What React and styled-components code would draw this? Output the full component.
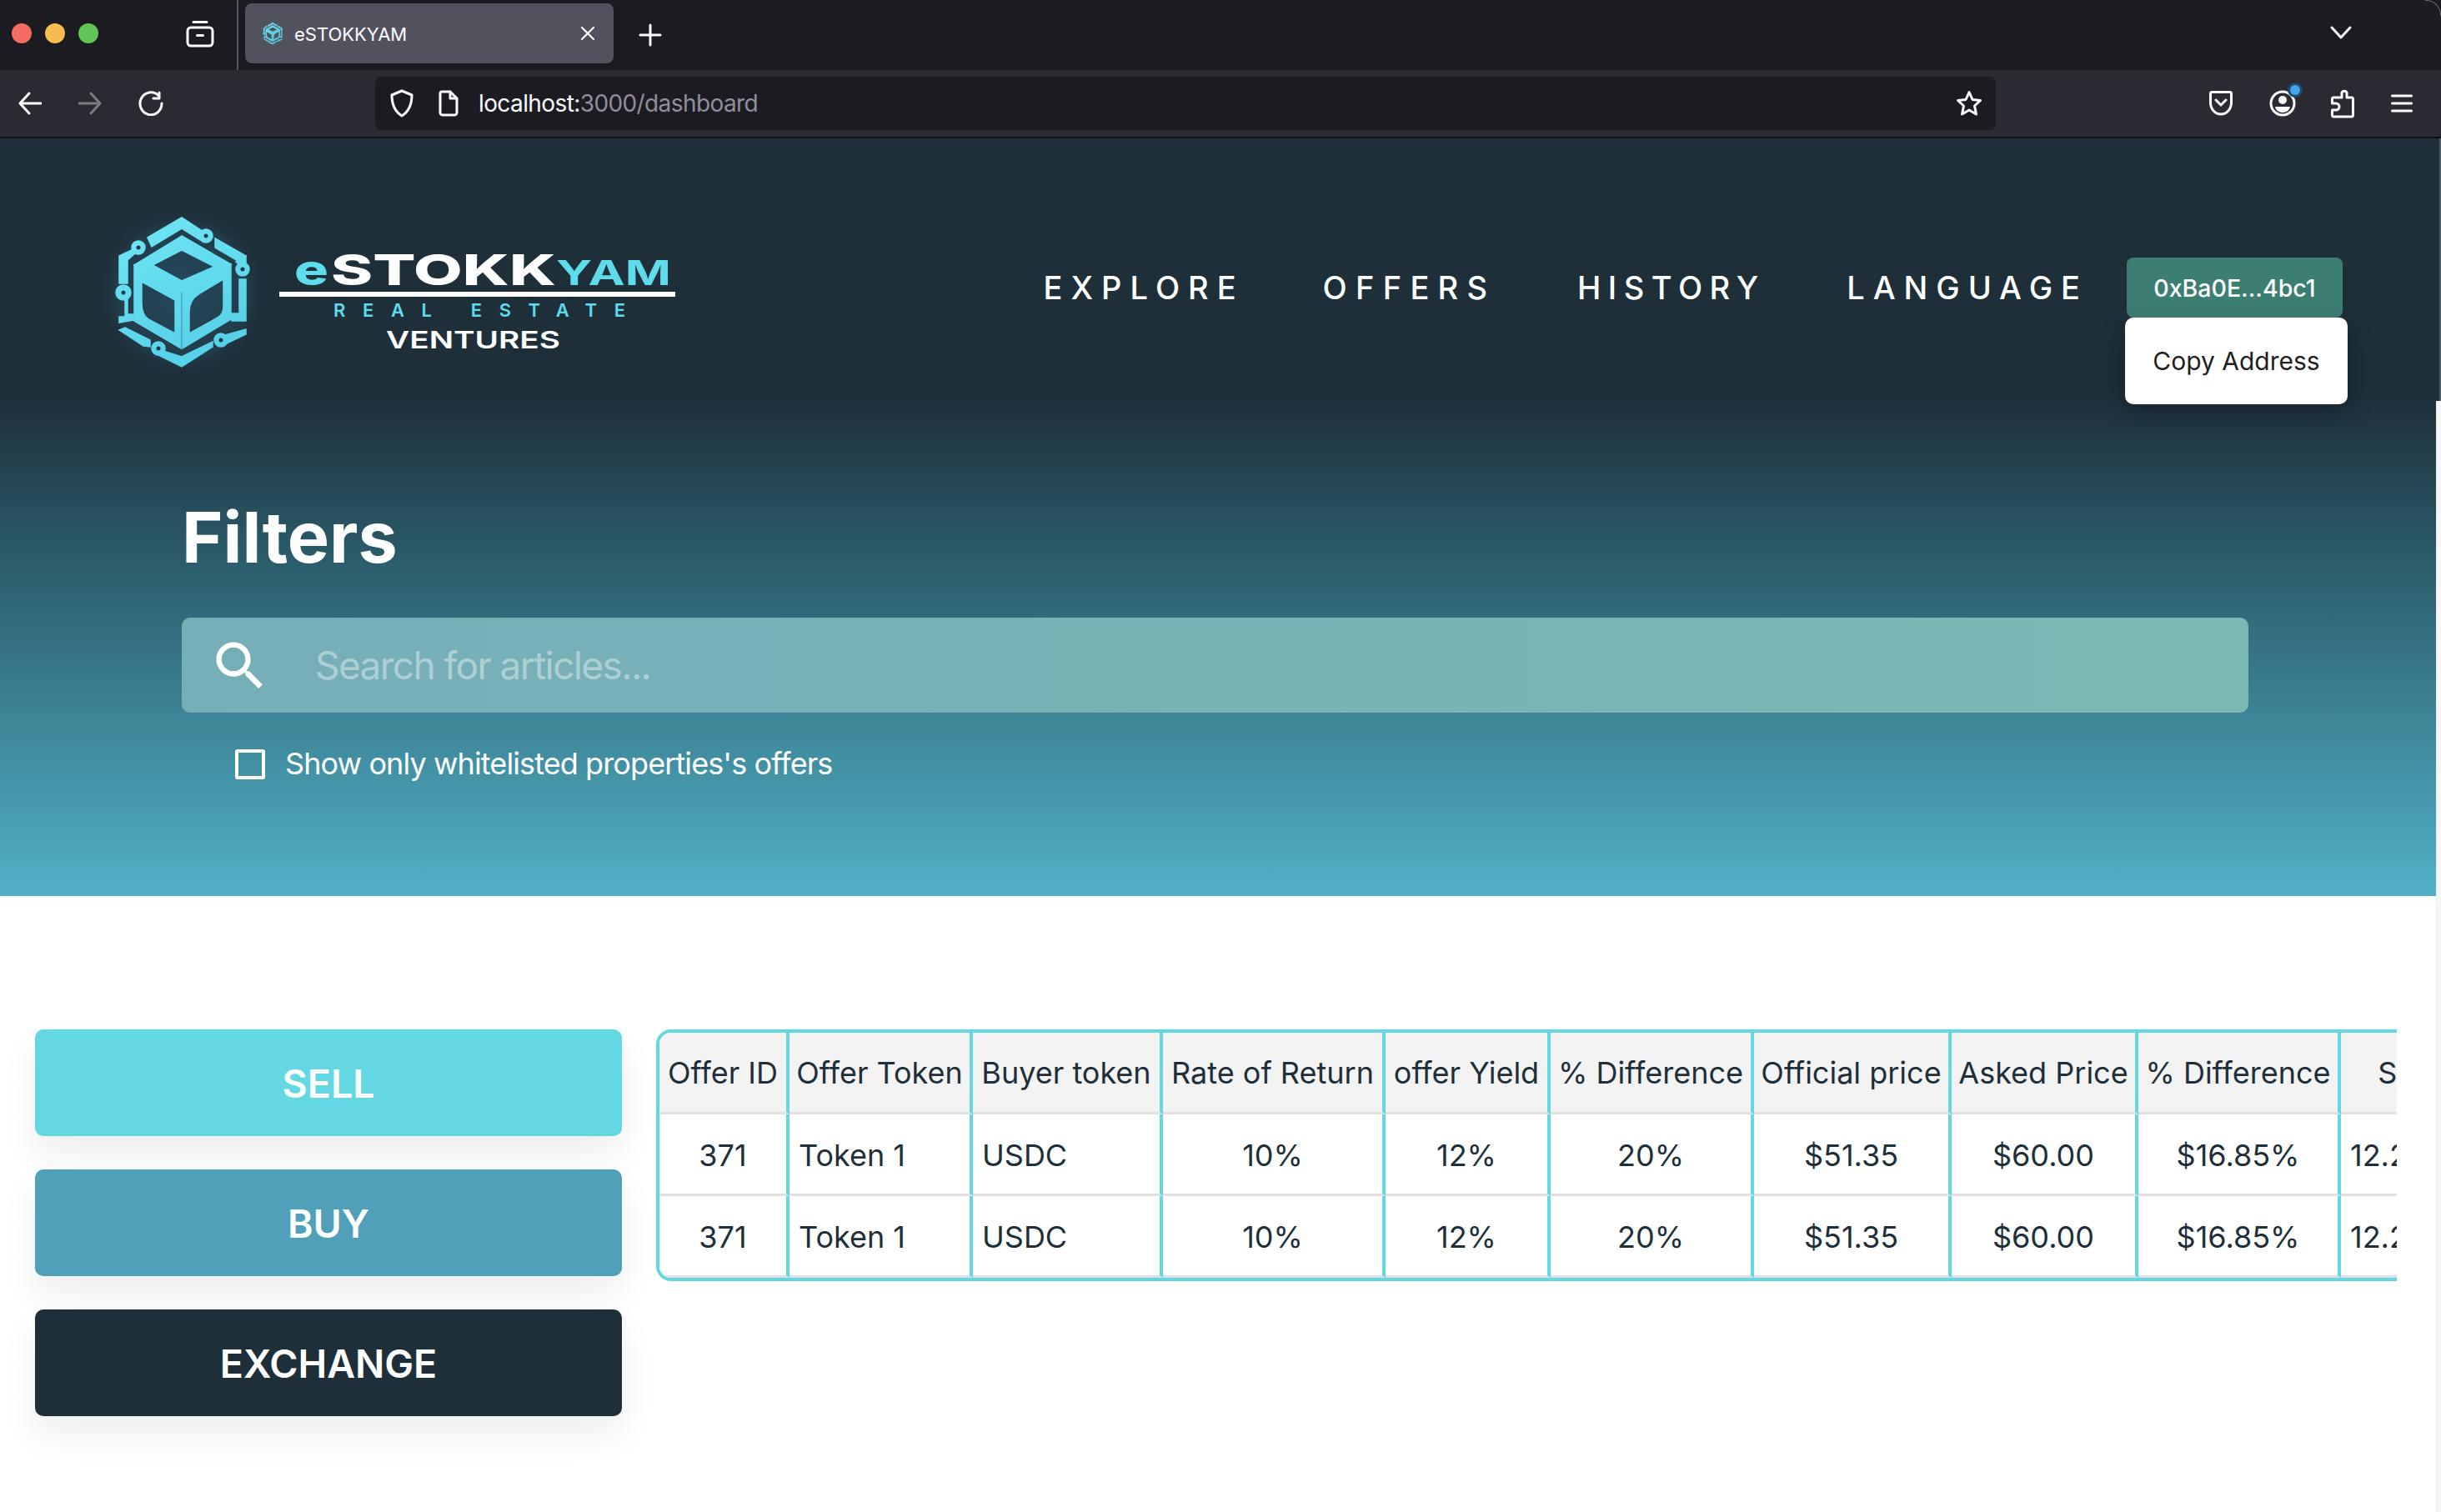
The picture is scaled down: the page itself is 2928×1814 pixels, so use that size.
import React from "react";
import styled, { createGlobalStyle } from "styled-components";

const Global = createGlobalStyle`
  html, body { margin: 0; padding: 0; background: #fff; }
  * { box-sizing: border-box; }
  #root { font-family: Inter, "Liberation Sans", sans-serif; }
`;

const Page = styled.div`
  position: relative;
  width: 2928px;
  height: 1814px;
  overflow: hidden;
  background: #fff;
`;

const TabBar = styled.div`
  position: relative;
  display: flex;
  align-items: flex-start;
  height: 84px;
  padding-left: 14px;
  background: #1c1b22;
  &::after {
    content: "";
    position: absolute;
    top: 0;
    right: 0;
    width: 18px;
    height: 18px;
    border-top: 1.5px solid #6d6d75;
    border-right: 1.5px solid #6d6d75;
    border-top-right-radius: 18px;
  }
`;
const Lights = styled.div`
  display: flex;
  gap: 16px;
  margin-top: 28px;
`;
const Light = styled.span`
  width: 24px;
  height: 24px;
  border-radius: 50%;
  background: ${(p) => p.$c};
`;
const ViewIcon = styled.svg`
  width: 34px;
  height: 34px;
  margin: 23px 0 0 105px;
`;
const Divider = styled.div`
  width: 2px;
  height: 84px;
  margin-left: 27px;
  background: #55555b;
`;
const Tab = styled.div`
  display: flex;
  align-items: center;
  width: 442px;
  height: 72px;
  margin: 4px 0 0 8px;
  padding: 0 20px 0 20px;
  border-radius: 8px;
  background: #52525e;
  box-shadow: 0 1px 3px rgba(0, 0, 0, 0.4);
`;
const TabTitle = styled.span`
  flex: 1;
  margin: 2px 0 0 13px;
  font-size: 22px;
  font-weight: 400;
  color: #fbfbfe;
`;
const PlainIcon = styled.svg`
  flex: none;
  display: block;
`;
const PlusIcon = styled(PlainIcon)`
  margin: 28px 0 0 30px;
`;
const ChevronIcon = styled(PlainIcon)`
  margin: 30px 0 0 auto;
  position: relative;
  right: 106px;
`;

const Toolbar = styled.div`
  display: flex;
  align-items: center;
  height: 82px;
  padding: 0 0 0 22px;
  background: #2b2a33;
  border-bottom: 2px solid #0f1216;
`;
const NavGroup = styled.div`
  display: flex;
  align-items: center;
  gap: 44px;
`;
const UrlBar = styled.div`
  display: flex;
  align-items: center;
  width: 1944px;
  height: 64px;
  margin-left: 254px;
  padding: 0 16px 0 18px;
  border-radius: 8px;
  background: #1c1b22;
`;
const UrlText = styled.span`
  margin-left: 24px;
  flex: 1;
  font-size: 28px;
  letter-spacing: -0.6px;
  color: #8f8f9d;
  & b {
    font-weight: 400;
    color: #fbfbfe;
  }
`;
const PageIcon = styled(PlainIcon)`
  margin-left: 30px;
`;
const RightGroup = styled(NavGroup)`
  margin-left: 256px;
`;
const Shifted = styled(PlainIcon)`
  margin-left: ${(p) => p.$ml}px;
`;

const Hero = styled.section`
  height: 909px;
  margin-right: 2px;
  background: linear-gradient(
    180deg,
    #1e2f3a 0%,
    #1e2f3a 34%,
    #2d6170 58%,
    #52b1c8 100%
  );
`;
const Header = styled.header`
  display: flex;
  justify-content: space-between;
  padding: 84px 116px 0 120px;
  height: 402px;
`;
const Logo = styled.svg`
  display: block;
  width: 700px;
  height: 200px;
`;
const Nav = styled.nav`
  display: flex;
  align-items: center;
  height: 72px;
  margin-top: 59px;
`;
const NavLink = styled.a`
  margin-right: ${(p) => p.$gap - p.$ls}px;
  font-family: Inter, sans-serif;
  font-size: 38px;
  font-weight: 500;
  letter-spacing: ${(p) => p.$ls}px;
  color: #fff;
  white-space: nowrap;
`;
const Wallet = styled.div`
  position: relative;
  display: flex;
  align-items: center;
  justify-content: center;
  width: 259px;
  height: 72px;
  border-radius: 8px;
  background: #3d7e72;
  color: #fff;
  font-size: 28.5px;
  font-weight: 500;
`;
const Dropdown = styled.div`
  position: absolute;
  top: 100%;
  left: -2px;
  display: flex;
  align-items: center;
  justify-content: center;
  width: 267px;
  height: 104px;
  border-radius: 10px;
  background: #fff;
  box-shadow: 0 12px 30px rgba(0, 0, 0, 0.25);
  color: #1f1f1f;
  font-size: 30px;
  font-weight: 400;
`;

const Filters = styled.div`
  padding: 0 229px 0 218px;
`;
const Title = styled.h1`
  margin: 0;
  height: 173px;
  padding-top: 16px;
  font-size: 84.5px;
  line-height: 120px;
  font-weight: 700;
  color: #fff;
`;
const Search = styled.div`
  display: flex;
  align-items: center;
  height: 114px;
  padding-left: 32px;
  border-radius: 10px;
  background: linear-gradient(90deg, #76aeb8, #7bb8b3);
`;
const SearchIcon = styled.svg`
  flex: none;
  width: 76px;
  height: 76px;
  margin-top: 2px;
  fill: #fff;
`;
const Placeholder = styled.span`
  margin-left: 52px;
  font-size: 46px;
  letter-spacing: -1.6px;
  color: rgba(255, 255, 255, 0.42);
`;
const CheckRow = styled.label`
  display: flex;
  align-items: center;
  gap: 24px;
  margin: 41px 0 0 64px;
  font-size: 36px;
  letter-spacing: -0.9px;
  color: #fff;
`;
const CheckText = styled.span`
  margin-top: -2px;
`;
const CheckBox = styled.span`
  width: 36px;
  height: 36px;
  border: 4px solid #fff;
  border-radius: 3px;
`;

const Main = styled.main`
  display: flex;
  gap: 41px;
  padding: 160px 53px 0 42px;
`;
const Actions = styled.div`
  display: flex;
  flex-direction: column;
  gap: 40px;
  flex: none;
  width: 704px;
`;
const Action = styled.button`
  height: 128px;
  padding: 2px 0 0;
  border: 0;
  border-radius: 10px;
  background: ${(p) => p.$bg};
  box-shadow: 0 22px 44px rgba(0, 0, 0, 0.07);
  color: #fff;
  font-family: inherit;
  font-size: 46.5px;
  font-weight: 600;
`;
const TableClip = styled.div`
  flex: 1;
  min-width: 0;
  height: 304px;
  overflow: hidden;
`;
const TableBox = styled.div`
  width: max-content;
  border: 4px solid #64d8e2;
  border-radius: 18px;
  overflow: hidden;
`;
const Table = styled.table`
  table-layout: fixed;
  width: 2223px;
  border-collapse: separate;
  border-spacing: 0;
  color: #1e2f3a;
  font-size: 36px;
`;
const Th = styled.th`
  height: 98px;
  padding: 0;
  font-weight: 400;
  text-align: center;
  white-space: nowrap;
  background: #f3f3f3;
  border-bottom: 3px solid #e0e0e0;
  &:not(:last-child) {
    border-right: 4px solid #64d8e2;
  }
`;
const Td = styled.td`
  height: 98px;
  padding: ${(p) => (p.$left ? "2px 0 0 11px" : "2px 0 0")};
  text-align: ${(p) => (p.$left ? "left" : "center")};
  white-space: nowrap;
  background: #fff;
  border-bottom: 3px solid #e0e0e0;
  &:not(:last-child) {
    border-right: 4px solid #64d8e2;
  }
`;
const Scrollbar = styled.div`
  position: absolute;
  top: 481px;
  right: 0;
  bottom: 0;
  width: 6px;
  background: #f6f6f6;
  border-left: 1px solid #ececec;
`;
const ScrollTop = styled.div`
  position: absolute;
  top: 166px;
  right: 0;
  width: 2px;
  height: 315px;
  background: #4c5a62;
`;

function Mark({ glow }) {
  return (
    <g>
      {glow && <circle cx="98" cy="100" r="100" fill="url(#glow)" />}
      <g fill="url(#cy)" stroke="url(#cy)" strokeWidth="1.5">
        <path fillRule="evenodd" d="M98 33L157 67L98 100L41 68ZM63 68L98 87L137 70L98 50Z" />
        <path fillRule="evenodd" d="M41 68L97 100V168L41 135ZM50 88V113Q50 128 58 133L90 150V110Z" />
        <path fillRule="evenodd" d="M99 100L157 67V133L99 168ZM148 85L118 103Q107 110 107 124V150L141 131Q148 127 148 118Z" />
        <path d="M57 35L98 11L124 28L120 38L98 24L62 46Z" />
        <circle cx="127" cy="33" r="8" />
        <path d="M138 36L175 57L165 63L138 47Z" />
        <circle cx="46" cy="47" r="8" />
        <path d="M23 57L38 50L42 54L33 62V90H23Z" />
        <circle cx="28" cy="101" r="9" />
        <path d="M33 108V127H40V134L23 137V130H30V110Z" />
        <path d="M163 64L175 57V66H165Z" />
        <circle cx="171" cy="73" r="8" />
        <path d="M167 85H175V135H158V126H167Z" />
        <path d="M23 146L30 143L60 158V166L52 165Z" />
        <circle cx="70" cy="168" r="8" />
        <path d="M66 168L98 178L135 160V166L98 190L66 174Z" />
        <circle cx="145" cy="158" r="8" />
        <path d="M150 152L175 145V151L152 162Z" />
      </g>
      <g fill="#1e3a48">
        <circle cx="127" cy="33" r="2.5" />
        <circle cx="46" cy="47" r="2.5" />
        <circle cx="28" cy="101" r="2.5" />
        <circle cx="171" cy="73" r="2.5" />
        <circle cx="70" cy="168" r="2.5" />
        <circle cx="145" cy="158" r="2.5" />
      </g>
    </g>
  );
}
const Defs = () => (
  <defs>
    <linearGradient id="cy" gradientUnits="userSpaceOnUse" x1="40" y1="10" x2="120" y2="190">
      <stop offset="0" stopColor="#6fe6f5" />
      <stop offset="1" stopColor="#55cfe8" />
    </linearGradient>
    <radialGradient id="glow">
      <stop offset="0" stopColor="#25495c" />
      <stop offset="0.8" stopColor="#223c4a" />
      <stop offset="1" stopColor="#1e2f3a" stopOpacity="0" />
    </radialGradient>
  </defs>
);

const ic = { fill: "none", stroke: "#fbfbfe", strokeWidth: 3, strokeLinecap: "round", strokeLinejoin: "round" };

const cols = [156, 220, 228, 267, 198, 244, 237, 224, 243, 206];
const heads = ["Offer ID", "Offer Token", "Buyer token", "Rate of Return", "offer Yield", "% Difference", "Official price", "Asked Price", "% Difference", "Supply"];
const row = [
  ["371"],
  ["Token 1", true],
  ["USDC", true],
  ["10%"],
  ["12%"],
  ["20%"],
  ["$51.35"],
  ["$60.00"],
  ["$16.85%"],
  ["12.25", true],
];

export default function App() {
  return (
    <Page>
      <Global />
      <TabBar>
        <Lights>
          <Light $c="#f26d60" />
          <Light $c="#f5bd4f" />
          <Light $c="#61c554" />
        </Lights>
        <ViewIcon viewBox="0 0 34 34" {...ic}>
          <path d="M9 3.5H25" />
          <rect x="2" y="10" width="30" height="22" rx="4" />
          <path d="M13.5 19.5H20.5" />
        </ViewIcon>
        <Divider />
        <Tab>
          <PlainIcon width="26" height="28" viewBox="15 5 165 190">
            <Mark />
          </PlainIcon>
          <TabTitle>eSTOKKYAM</TabTitle>
          <PlainIcon width="22" height="22" viewBox="0 0 22 22" {...ic} strokeWidth="2.2">
            <path d="M4 4L18 18M18 4L4 18" />
          </PlainIcon>
        </Tab>
        <PlusIcon width="28" height="28" viewBox="0 0 28 28" {...ic}>
          <path d="M14 2V26M2 14H26" />
        </PlusIcon>
        <ChevronIcon width="28" height="20" viewBox="0 0 28 20" {...ic}>
          <path d="M3 3L14 15L25 3" />
        </ChevronIcon>
      </TabBar>
      <Toolbar>
        <NavGroup>
          <PlainIcon width="28" height="30" viewBox="0 0 28 30" {...ic}>
            <path d="M27 15H2M13 3L2 15L13 27" />
          </PlainIcon>
          <PlainIcon width="28" height="30" viewBox="0 0 28 30" {...ic} stroke="#7b7b82">
            <path d="M1 15H26M15 3L26 15L15 27" />
          </PlainIcon>
          <PlainIcon width="30" height="30" viewBox="0 0 30 30" {...ic}>
            <path d="M24 5.5A13 13.5 0 1 0 28 15" />
            <path d="M25 2V9H18" />
          </PlainIcon>
        </NavGroup>
        <UrlBar>
          <PlainIcon width="28" height="34" viewBox="0 0 28 34" {...ic}>
            <path d="M14 2L26 7C26 20 22 27 14 32C6 27 2 20 2 7Z" />
          </PlainIcon>
          <PageIcon width="24" height="32" viewBox="0 0 24 32" {...ic}>
            <path d="M4 2H14L22 10V27A3 3 0 0 1 19 30H5A3 3 0 0 1 2 27V4A2 2 0 0 1 4 2Z" />
            <path d="M14 2V10H22" />
          </PageIcon>
          <UrlText>
            <b>localhost:</b>3000/dashboard
          </UrlText>
          <PlainIcon width="32" height="32" viewBox="0 0 32 32" {...ic}>
            <path d="M16 2.5L20 11.5L29.5 12.5L22.5 19L24.5 29L16 24L7.5 29L9.5 19L2.5 12.5L12 11.5Z" />
          </PlainIcon>
        </UrlBar>
        <RightGroup>
          <PlainIcon width="28" height="30" viewBox="0 0 28 30" {...ic}>
            <path d="M3 1.5H25A1.5 1.5 0 0 1 26.5 3V14A12.5 14 0 0 1 1.5 14V3A1.5 1.5 0 0 1 3 1.5Z" />
            <path d="M8 11L14 17L20 11" />
          </PlainIcon>
          <Shifted $ml={0} width="32" height="36" viewBox="0 0 32 36" overflow="visible">
            <circle cx="16" cy="18" r="14" {...ic} />
            <circle cx="16" cy="14" r="5" fill="#fbfbfe" />
            <path d="M7 22H25C24 27 20 29 16 29C12 29 8 27 7 22Z" fill="#fbfbfe" />
            <circle cx="31" cy="2" r="9" fill="#1f4a66" />
            <circle cx="31" cy="2" r="6" fill="#45a5ee" />
          </Shifted>
          <Shifted $ml={-2} width="28" height="36" viewBox="0 0 28 36" {...ic}>
            <path d="M13 9V5A3.5 3.5 0 0 1 19 5V11H25A1.5 1.5 0 0 1 26.5 12.5V32A2 2 0 0 1 24.5 34H3.5A2 2 0 0 1 1.5 32V26H6A3.5 3.5 0 0 0 6 18H1.5V12.5A1.5 1.5 0 0 1 3 11H13Z" />
          </Shifted>
          <PlainIcon width="26" height="24" viewBox="0 0 26 24" {...ic}>
            <path d="M1.5 3H24.5M1.5 12H24.5M1.5 21H24.5" />
          </PlainIcon>
        </RightGroup>
      </Toolbar>
      <Hero>
        <Header>
          <Logo viewBox="0 0 700 200">
            <Defs />
            <Mark glow />
            <g fontFamily="Inter, sans-serif">
              <text x="233" y="92" fontSize="51" fontWeight="800" fill="#5fdceb" textLength="41" lengthAdjust="spacingAndGlyphs">e</text>
              <text x="277" y="92" fontSize="51" fontWeight="800" fill="#fff" textLength="270" lengthAdjust="spacingAndGlyphs">STOKK</text>
              <text x="547" y="92" fontSize="41" fontWeight="700" fill="#5fdceb" textLength="138" lengthAdjust="spacingAndGlyphs">YAM</text>
              <rect x="215" y="100" width="475" height="6" fill="#fff" />
              <text x="280" y="130" fontSize="22" fontWeight="600" fill="#5fdceb" textLength="350">REAL ESTATE</text>
              <text x="343" y="168" fontSize="29" fontWeight="600" fill="#fff" textLength="209" lengthAdjust="spacingAndGlyphs">VENTURES</text>
            </g>
          </Logo>
          <Nav>
            <NavLink $gap={104} $ls={10}>EXPLORE</NavLink>
            <NavLink $gap={108} $ls={10.3}>OFFERS</NavLink>
            <NavLink $gap={106} $ls={8.5}>HISTORY</NavLink>
            <NavLink $gap={56} $ls={10}>LANGUAGE</NavLink>
            <Wallet>
              0xBa0E...4bc1
              <Dropdown>Copy Address</Dropdown>
            </Wallet>
          </Nav>
        </Header>
        <Filters>
          <Title>Filters</Title>
          <Search>
            <SearchIcon viewBox="0 0 24 24">
              <path d="M15.5 14h-.79l-.28-.27C15.41 12.59 16 11.11 16 9.5 16 5.91 13.09 3 9.5 3S3 5.91 3 9.5 5.91 16 9.5 16c1.61 0 3.09-.59 4.23-1.57l.27.28v.79l5 4.99L20.49 19l-4.99-5zm-6 0C7.01 14 5 11.99 5 9.5S7.01 5 9.5 5 14 7.01 14 9.5 11.99 14 9.5 14z" />
            </SearchIcon>
            <Placeholder>Search for articles...</Placeholder>
          </Search>
          <CheckRow>
            <CheckBox />
            <CheckText>Show only whitelisted properties's offers</CheckText>
          </CheckRow>
        </Filters>
      </Hero>
      <Main>
        <Actions>
          <Action $bg="#64d8e2">SELL</Action>
          <Action $bg="#50a0ba">BUY</Action>
          <Action $bg="#1e2f3a">EXCHANGE</Action>
        </Actions>
        <TableClip>
          <TableBox>
            <Table>
              <colgroup>
                {cols.map((w, i) => (
                  <col key={i} style={{ width: w }} />
                ))}
              </colgroup>
              <thead>
                <tr>
                  {heads.map((h, i) => (
                    <Th key={i}>{h}</Th>
                  ))}
                </tr>
              </thead>
              <tbody>
                {[0, 1].map((r) => (
                  <tr key={r}>
                    {row.map(([t, left], i) => (
                      <Td key={i} $left={left}>
                        {t}
                      </Td>
                    ))}
                  </tr>
                ))}
              </tbody>
            </Table>
          </TableBox>
        </TableClip>
      </Main>
      <ScrollTop />
      <Scrollbar />
    </Page>
  );
}
